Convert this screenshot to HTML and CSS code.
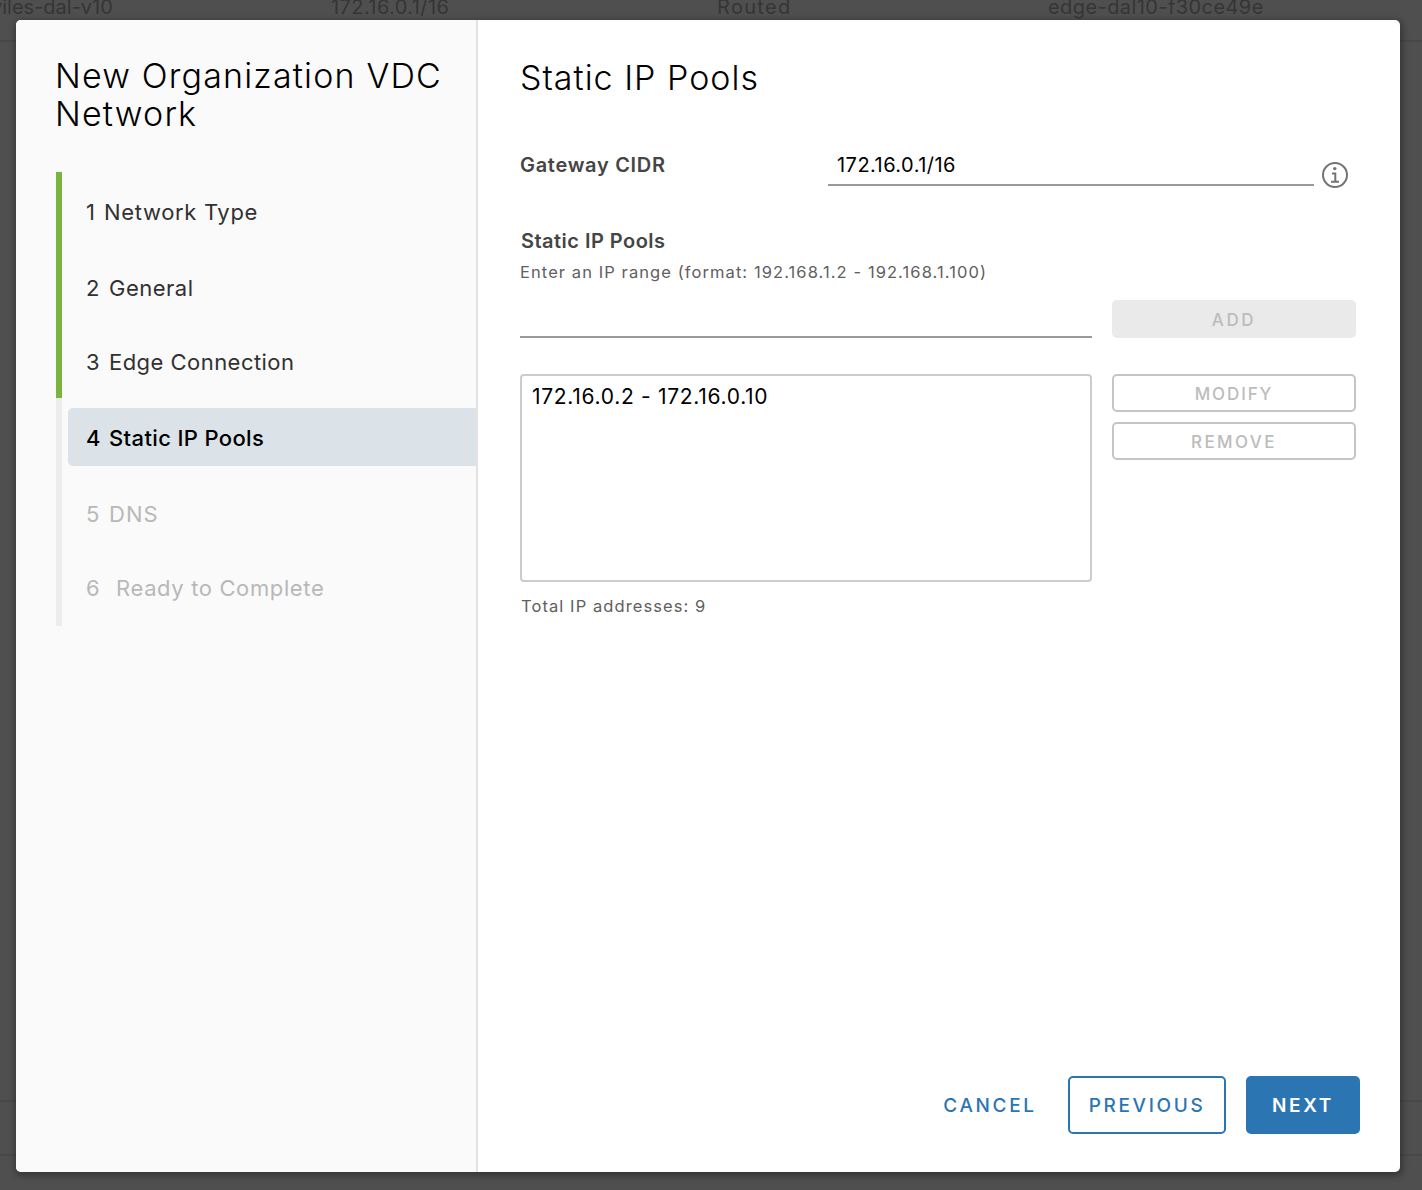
FILE: index.html
```html
<!DOCTYPE html>
<html lang="en">
<head>
<meta charset="utf-8">
<title>New Organization VDC Network</title>
<link rel="stylesheet" href="styles.css">
</head>
<body>
<div class="backdrop">
  <div class="grid-row">
    <span class="cell cell-name">viles-dal-v10</span>
    <span class="cell">172.16.0.1/16</span>
    <span class="cell cell-type">Routed</span>
    <span class="cell">edge-dal10-f30ce49e</span>
  </div>
  <div class="grid-space"></div>
  <div class="grid-footer"></div>
</div>
<div class="modal" role="dialog">
  <aside class="sidebar">
    <h1 class="title">New Organization VDC<br>Network</h1>
    <ol class="steps">
      <li class="step done"><a class="link"><span class="num narrow">1</span><span class="step-type">Network Type</span></a></li>
      <li class="step done"><a class="link"><span class="num">2</span><span class="step-general">General</span></a></li>
      <li class="step done short"><a class="link"><span class="num">3</span><span class="step-edge">Edge Connection</span></a></li>
      <li class="step current"><a class="link"><span class="num">4</span><span class="step-pools">Static IP Pools</span></a></li>
      <li class="step"><a class="link"><span class="num">5</span><span class="step-dns">DNS</span></a></li>
      <li class="step short last"><a class="link"><span class="num wide">6</span><span class="step-ready">Ready to Complete</span></a></li>
    </ol>
  </aside>
  <main class="content">
    <h2 class="heading">Static IP Pools</h2>
    <div class="gateway">
      <label class="label gateway-label">Gateway CIDR</label>
      <div class="field">172.16.0.1/16</div>
      <svg class="info" viewBox="0 0 26 26"><circle cx="13" cy="13" r="12" fill="none" stroke="#737373" stroke-width="2"/><circle cx="12.8" cy="6.6" r="1.7" fill="#737373"/><path d="M10 11.5h3.3v8M9 19.7h8" fill="none" stroke="#737373" stroke-width="2"/></svg>
    </div>
    <div class="label pools-label">Static IP Pools</div>
    <div class="hint">Enter an IP range (format: 192.168.1.2 - 192.168.1.100)</div>
    <div class="pools">
      <div class="range"></div>
      <button class="btn add">ADD</button>
      <div class="list">172.16.0.2 - 172.16.0.10</div>
      <div class="actions">
        <button class="btn modify">MODIFY</button>
        <button class="btn remove">REMOVE</button>
      </div>
    </div>
    <div class="hint total">Total IP addresses: 9</div>
    <footer class="footer">
      <button class="nav cancel">CANCEL</button>
      <button class="nav previous">PREVIOUS</button>
      <button class="nav next">NEXT</button>
    </footer>
  </main>
</div>
</body>
</html>
```
FILE: styles.css
```css
* { box-sizing: border-box; }
body { margin: 0; height: 1190px; overflow: hidden; background: #4f4f4f; font-family: Inter, "Liberation Sans", sans-serif; position: relative; }

/* Page behind the dialog */
.backdrop { height: 1190px; display: flex; flex-direction: column; color: #353535; font-size: 20px; }
.grid-row { height: 42px; border-bottom: 2px solid #484848; display: grid; grid-template-columns: 331px 386px 331px 1fr; line-height: 14px; white-space: nowrap; }
.cell { letter-spacing: .42px; }
.cell-name { margin-left: -9px; letter-spacing: 0; }
.cell-type { letter-spacing: 1.32px; }
.grid-space { flex: 1; }
.grid-footer { height: 56px; border-top: 2px solid #484848; border-bottom: 2px solid #484848; margin-bottom: 34px; }

.modal { position: absolute; left: 16px; top: 20px; width: 1384px; height: 1152px; display: flex; background: #fff; border-radius: 5px; overflow: hidden; box-shadow: 1px 2px 6px 2px rgba(0,0,0,.3); }

/* Wizard steps */
.sidebar { width: 462px; padding: 37px 0 0 40px; background: #fafafa; border-right: 2px solid #e2e2e2; }
.title, .heading { margin: 0; font-size: 34px; font-weight: 300; line-height: 38px; color: #000; white-space: nowrap; }
.title { letter-spacing: 1.16px; margin-left: -1px; }
.heading { letter-spacing: 1px; }
.steps { list-style: none; margin: 39px 0 0; padding: 0; font-size: 22px; color: #b8b8b8; }
.step { height: 76px; border-left: 6px solid #ececec; padding: 10px 0 0 6px; }
.step.short { height: 74px; padding-top: 8px; }
.step.last { height: 76px; }
.step.done { border-color: #79b43c; color: #313131; }
.link { display: flex; height: 58px; padding: 2px 0 0 18px; align-items: center; border-radius: 5px 0 0 5px; white-space: nowrap; }
.num { width: 23px; }
.num.narrow { width: 18px; }
.num.wide { width: 30px; }
.current .link { background: #dbe3e9; color: #000; font-weight: 500; }
.step-type { letter-spacing: .66px; }
.step-general { letter-spacing: .5px; }
.step-edge { letter-spacing: .46px; }
.step-pools { letter-spacing: .36px; }
.step-dns { letter-spacing: 1px; }
.step-ready { letter-spacing: .63px; }

/* Form */
.content { flex: 1; padding: 39px 40px 38px 42px; display: flex; flex-direction: column; white-space: nowrap; }
.gateway { display: flex; height: 48px; margin-top: 43px; align-items: flex-start; }
.label { width: 308px; font-size: 20px; font-weight: 600; color: #454545; line-height: 32px; }
.gateway-label { margin-top: 9px; letter-spacing: .7px; }
.pools-label { margin-top: 37px; padding-left: 1px; letter-spacing: .47px; }
.field { width: 486px; height: 46px; padding: 9px 0 0 9px; border-bottom: 2px solid #999; line-height: 32px; font-size: 20px; letter-spacing: .47px; color: #000; }
.info { width: 26px; height: 26px; margin: 22px 0 0 8px; }
.hint { font-size: 16.5px; line-height: 24px; letter-spacing: 1.08px; color: #606060; margin-top: 3px; }
.pools { display: grid; grid-template-columns: 572px 244px; grid-template-rows: 38px 208px; gap: 36px 20px; margin-top: 16px; }
.range { border-bottom: 2px solid #999; }
.list { border: 2px solid #ccc; border-radius: 4px; padding: 5px 10px; font-size: 21px; line-height: 32px; letter-spacing: .7px; color: #000; }
.actions { display: flex; flex-direction: column; gap: 10px; }
.btn { font: 500 17px Inter, sans-serif; height: 38px; border: 2px solid #c5c5c5; border-radius: 5px; background: #fff; color: #bcbcbc; padding: 2px 0 0; }
.add { background: #eaeaea; border-color: #eaeaea; letter-spacing: 2.6px; }
.modify { letter-spacing: 1.9px; }
.remove { letter-spacing: 2.4px; }
.total { margin-top: 12px; padding-left: 1px; }

.footer { display: flex; justify-content: flex-end; margin-top: auto; }
.nav { height: 58px; border: 2px solid #2c75b3; border-radius: 5px; background: #fff; color: #2c75b3; font: 500 19px Inter, sans-serif; letter-spacing: 2.65px; padding: 0; }
.cancel { width: 116px; border-color: transparent; }
.previous { width: 158px; margin-left: 20px; }
.next { width: 114px; margin-left: 20px; background: #2c75b3; color: #fff; font-weight: 600; }
```
